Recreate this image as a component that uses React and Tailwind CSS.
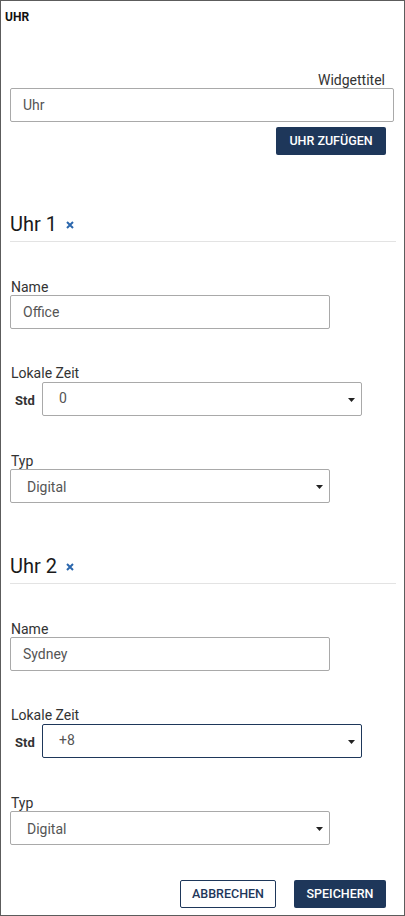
import React from "react";

const Caret = () => (
  <svg width="7" height="4" viewBox="0 0 7 4" className="absolute right-[6px] top-[15px]">
    <path d="M0 0 L7 0 L3.5 4 Z" fill="#222" />
  </svg>
);

const XIcon = () => (
  <svg width="8" height="8" viewBox="0 0 8 8" className="ml-[9px] mt-[2px]">
    <path d="M1 1 L7 7 M7 1 L1 7" stroke="#2b67ad" strokeWidth="2" />
  </svg>
);

function Clock({ n, name, offset, focused }) {
  return (
    <div className="flex flex-col">
      <div className="flex items-center pb-[5px] border-b border-[#e3e3e3] mr-[-1px]">
        <span className="text-[20px] leading-[24px] text-[#1a1a1a]">Uhr {n}</span>
        <XIcon />
      </div>
      <div className="mt-[37px] text-[14px] leading-[16px] text-[#333] pl-[1px]">Name</div>
      <div className="w-[320px] h-[34px] border border-[#a9a9a9] rounded-[2px] flex items-center pl-[12px] text-[14px] text-[#555]">
        {name}
      </div>
      <div className="mt-[36px] text-[14px] leading-[16px] text-[#333] pl-[1px]">Lokale Zeit</div>
      <div className="mt-[1px] flex items-center">
        <div className="w-[32px] pl-[5px] pt-[3px] text-[13px] font-bold text-[#333]">Std</div>
        <div
          className={
            "relative w-[320px] h-[34px] rounded-[2px] pl-[16px] pt-[7px] text-[14px] leading-[16px] text-[#555] border " +
            (focused ? "border-[#1e375a]" : "border-[#a9a9a9]")
          }
        >
          {offset}
          <Caret />
        </div>
      </div>
      <div className="mt-[37px] text-[14px] leading-[16px] text-[#333] pl-[1px]">Typ</div>
      <div className="relative w-[320px] h-[34px] border border-[#a9a9a9] rounded-[2px] pl-[16px] pt-[9px] text-[14px] leading-[16px] text-[#555]">
        Digital
        <Caret />
      </div>
    </div>
  );
}

export default function App() {
  return (
    <div
      className="w-[405px] h-[916px] border border-[#5c5c5c] bg-white flex flex-col"
      style={{ fontFamily: "Roboto, 'Liberation Sans', sans-serif" }}
    >
      <div className="pt-[10px] pl-[4px] text-[12px] leading-[13px] font-bold text-[#111]">UHR</div>
      <div className="mt-[48px] px-[9px] flex flex-col">
        <div className="text-right pr-[10px] text-[14px] leading-[16px] text-[#333]">Widgettitel</div>
        <div className="h-[34px] w-[384px] border border-[#a9a9a9] rounded-[2px] flex items-center pl-[12px] text-[14px] text-[#555]">
          Uhr
        </div>
        <div className="flex justify-end pr-[9px] mt-[5px]">
          <button className="w-[110px] h-[28px] bg-[#1e375a] rounded-[2px] text-white text-[12.5px] font-medium">
            UHR ZUFÜGEN
          </button>
        </div>
        <div className="mt-[57px]">
          <Clock n={1} name="Office" offset="0" />
        </div>
        <div className="mt-[51px]">
          <Clock n={2} name="Sydney" offset="+8" focused />
        </div>
        <div className="flex justify-end gap-[18px] pr-[9px] mt-[35px]">
          <button className="w-[96px] h-[28px] bg-white border border-[#1e375a] rounded-[2px] text-[#1e375a] text-[12.5px] font-medium">
            ABBRECHEN
          </button>
          <button className="w-[92px] h-[28px] bg-[#1e375a] rounded-[2px] text-white text-[12.5px] font-medium">
            SPEICHERN
          </button>
        </div>
      </div>
    </div>
  );
}
